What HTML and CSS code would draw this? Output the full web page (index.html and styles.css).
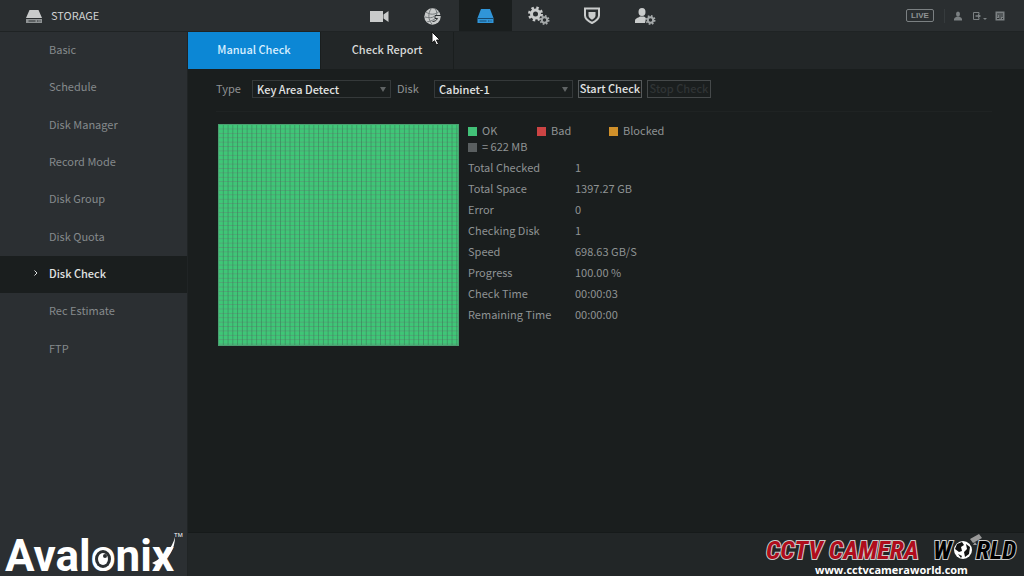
FILE: index.html
```html
<!DOCTYPE html>
<html lang="en">
<head>
<meta charset="utf-8">
<title>Storage - Disk Check</title>
<link rel="stylesheet" href="styles.css">
</head>
<body>
<div class="app">
  <header class="topbar">
    <h1 class="title">
      <svg class="title-icon" viewBox="0 0 18 16" width="18" height="16" aria-hidden="true">
        <path class="light" d="M4.500 2h9L17 10H1z"/>
        <path class="base" d="M1 10h16v5H1z"/>
        <path class="dark" d="M1 10.500h16M3.500 13h7M12 13h1.500M14.500 13h1"/>
      </svg>
      <span class="title-text">STORAGE</span>
    </h1>
    <nav class="modules" aria-label="Modules">
      <a class="module" href="#camera" aria-label="Camera"><svg viewBox="0 0 20 20" width="20" height="20"><path class="light" d="M0 5h13v11H0zM13.500 8.500L18.500 5v11l-5-3.500z"/></svg></a>
      <a class="module" href="#network" aria-label="Network"><svg viewBox="0 0 20 20" width="20" height="20"><circle class="light" cx="9.500" cy="10.500" r="8.200"/><path class="mesh" d="M3 6c4 3 9 3 13-.5M2 11c4 1 7 1 9-.5M4 16c4-1 7-2 9-4M8 3c-3 4-3 11 1 15M12 3c2 2 2 4 1.500 6"/><path class="dark" d="M18 9.500h-6v3h2.500c-1 2-3 3-5 3"/></svg></a>
      <a class="module is-active" href="#storage" aria-label="Storage"><svg viewBox="0 0 20 20" width="20" height="20"><path class="blue" d="M5 3h9l3.500 9h-16zM1.500 12h16v5h-16z"/><path class="blue-line" d="M1.500 12.500h16M3.500 15h7M12 15h1.500M14.500 15h1"/></svg></a>
      <a class="module" href="#system" aria-label="System"><svg viewBox="0 0 22 20" width="22" height="20"><circle class="gear" cx="7.500" cy="8" r="4"/><circle class="teeth" cx="7.500" cy="8" r="6"/><circle class="gear small" cx="16.500" cy="14" r="2.700"/><circle class="teeth small" cx="16.500" cy="14" r="4"/></svg></a>
      <a class="module" href="#security" aria-label="Security"><svg viewBox="0 0 20 20" width="20" height="20"><path class="shield" d="M3 2.500h14v7c0 4-4 6-7 7.500C7 15.500 3 13.500 3 9.500z"/><path class="light" d="M6.500 6h7v3.500c0 2-2 3.500-3.500 4.200C8.500 13 6.500 11.500 6.500 9.500z"/></svg></a>
      <a class="module" href="#account" aria-label="Account"><svg viewBox="0 0 22 20" width="22" height="20"><ellipse class="light" cx="8" cy="6" rx="3.500" ry="4"/><path class="light" d="M1 17v-2c0-3 3-3 5-4.500h4c1 1 2 1 2 2L11 17z"/><circle class="gear small" cx="16.500" cy="14" r="2.700"/><circle class="teeth small" cx="16.500" cy="14" r="4"/></svg></a>
    </nav>
    <div class="tools">
      <button class="live" type="button">LIVE</button>
      <span class="divider"></span>
      <button class="tool" type="button" aria-label="User"><svg viewBox="0 0 10 10" width="10" height="10"><ellipse cx="5" cy="3" rx="2" ry="2.500"/><path d="M1 9.500V8q0-1.500 3-2.500h2Q9 6.500 9 8v1.500z"/></svg></button>
      <button class="tool" type="button" aria-label="Log out"><svg viewBox="0 0 16 10" width="16" height="10"><path class="line" d="M8 3V1.500H2.500v7H8V7"/><path d="M4.500 4.200H7V2.500L10 5 7 7.500V5.800H4.500zM12 7h4l-2 2z"/></svg></button>
      <button class="tool" type="button" aria-label="QR code"><svg viewBox="0 0 10 10" width="10" height="10"><path d="M.5.500h9v9h-9z"/><path class="dark" d="M2 3h2M6 3h2M2 5h1M5 2v6M6 5h2M2 7.500h2M7 7.500h1"/></svg></button>
    </div>
  </header>

  <aside class="sidebar">
    <nav class="menu" aria-label="Storage">
      <a href="#basic">Basic</a>
      <a href="#schedule">Schedule</a>
      <a href="#manager">Disk Manager</a>
      <a href="#record">Record Mode</a>
      <a href="#group">Disk Group</a>
      <a href="#quota">Disk Quota</a>
      <a class="is-active" href="#check" aria-current="page"><svg class="chevron" viewBox="0 0 6 8" width="6" height="8" aria-hidden="true"><path d="M1.500 1.500L4 4 1.500 6.500"/></svg>Disk Check</a>
      <a href="#estimate">Rec Estimate</a>
      <a href="#ftp">FTP</a>
    </nav>
    <svg class="avalonix" viewBox="0 0 187 50" width="187" height="50" role="img" aria-label="Avalonix">
      <text class="avalonix-name" x="5" y="45">Avalonix</text>
      <ellipse class="eye-socket" cx="103" cy="33" rx="8" ry="9"/>
      <ellipse class="eye" cx="103" cy="33" rx="5" ry="6"/>
      <circle class="eye-socket" cx="105" cy="30" r="2"/>
      <path class="swoosh" d="M175 11c0 12-6 21-17 29l-6-3c12-6 20-14 23-26z"/>
      <text class="avalonix-tm" x="174" y="11">TM</text>
    </svg>
  </aside>

  <main class="main">
    <div class="tabs" role="tablist">
      <button class="tab is-active" type="button" role="tab" aria-selected="true">Manual Check</button>
      <button class="tab" type="button" role="tab" aria-selected="false">Check Report</button>
    </div>
    <section class="panel">
      <form class="filters">
        <label class="type-label" for="type">Type</label>
        <select id="type"><option>Key Area Detect</option></select>
        <label class="disk-label" for="disk">Disk</label>
        <select id="disk"><option>Cabinet-1</option></select>
        <button class="action" type="button">Start Check</button>
        <button class="action" type="button" disabled>Stop Check</button>
      </form>
      <div class="result">
        <div class="blocks" role="img" aria-label="Disk block map"></div>
        <div class="details">
          <ul class="legend">
            <li><i class="swatch ok"></i>OK</li>
            <li><i class="swatch bad"></i>Bad</li>
            <li><i class="swatch blocked"></i>Blocked</li>
            <li class="unit"><i class="swatch"></i>= 622 MB</li>
          </ul>
          <dl class="stats">
            <dt>Total Checked</dt><dd>1</dd>
            <dt>Total Space</dt><dd>1397.27 GB</dd>
            <dt>Error</dt><dd>0</dd>
            <dt>Checking Disk</dt><dd>1</dd>
            <dt>Speed</dt><dd>698.63 GB/S</dd>
            <dt>Progress</dt><dd>100.00 %</dd>
            <dt>Check Time</dt><dd>00:00:03</dd>
            <dt>Remaining Time</dt><dd>00:00:00</dd>
          </dl>
        </div>
      </div>
    </section>
    <footer class="footer">
      <svg class="ccw" viewBox="0 0 262 43" width="262" height="43" role="img" aria-label="CCTV Camera World">
        <text class="ccw-red" x="4" y="26">CCTV CAMERA</text>
        <text class="ccw-black" x="171" y="26">W</text>
        <text class="ccw-black" x="214" y="26">RLD</text>
        <circle class="globe" cx="201" cy="17" r="9"/>
        <path class="land" d="M195 11l5-2 2 3-3 2 1 4-3 1-4-3zM204 11l4 3-1 7-4 3-1-5 3-3zM196 21l4 2-1 2z"/>
        <path class="cam" d="M208 6l9-5 3 4-9 5zM213 9l2 3h-4z"/>
        <text class="ccw-url" x="53" y="41">www.cctvcameraworld.com</text>
      </svg>
    </footer>
  </main>
</div>
<svg class="cursor" viewBox="0 0 10 16" width="10" height="16" aria-hidden="true"><path d="M1 1v11l2.500-2.300L5.500 14l2-1-2-4H9z"/></svg>
</body>
</html>
```
FILE: styles.css
```css
* { box-sizing: border-box; }
body { margin: 0; background: #1a1e1e; color: #8f9394; font: 11px/16px "Noto Sans CJK SC", "Noto Sans", sans-serif; }
a { color: inherit; text-decoration: none; }
button, select { font: inherit; color: inherit; }
svg { display: block; flex: none; }
.light { fill: #c9cbcb; }
.base { fill: #8f9394; }
.blue { fill: #3095d8; }
.blue-line { fill: none; stroke: #164a70; }
.dark { fill: none; stroke: #2a2e30; }
.mesh { fill: none; stroke: #74797b; }
.app { display: grid; grid-template: 32px 1fr / 188px 1fr; min-height: 100vh; }
.topbar { grid-column: 1 / 3; display: flex; background: #2a2e30; border-bottom: 1px solid #1f2324; }
.title { display: flex; align-items: center; gap: 8px; width: 353px; margin: 0; padding-left: 25px; font-size: 11px; font-weight: 400; color: #d0d2d2; }
.title-text { padding-bottom: 2px; }
.modules { display: flex; }
.module { display: grid; place-items: center; width: 53px; }
.module.is-active { background: #1a1e1e; }
.gear { fill: none; stroke: #c9cbcb; stroke-width: 3; }
.teeth { fill: none; stroke: #c9cbcb; stroke-width: 3; stroke-dasharray: 2.360; }
.gear.small { stroke: #a4a8a9; stroke-width: 2; }
.teeth.small { stroke: #a4a8a9; stroke-width: 2; stroke-dasharray: 1.570; }
.shield { fill: none; stroke: #c9cbcb; stroke-width: 2; }
.tools { display: flex; align-items: center; gap: 8px; margin-left: auto; padding-right: 19px; }
.live { width: 28px; height: 13px; padding: 0; border: 1px solid #7b8082; border-radius: 2px; background: none; color: #8f9394; font: 700 8px/11px "Liberation Sans", sans-serif; margin-right: 2px; }
.divider { width: 1px; height: 14px; background: #363b3d; }
.tool { padding: 0; border: 0; background: none; fill: #7b8082; }
.line { fill: none; stroke: #7b8082; }
.sidebar { display: flex; flex-direction: column; justify-content: space-between; background: #2b2f32; border-right: 1px solid #202425; }
.menu { display: flex; flex-direction: column; height: 336px; }
.menu a { position: relative; flex: 1; display: flex; align-items: center; padding: 0 0 3px 49px; color: #858a8c; }
.menu a.is-active { background: #1a1e1e; color: #e2e4e4; font-weight: 500; }
.chevron { position: absolute; left: 33px; fill: none; stroke: #e2e4e4; }
.avalonix-name { font: 700 44px "Roboto", sans-serif; fill: #fff; }
.avalonix-tm { font: 6px "Liberation Sans", sans-serif; fill: #fff; }
.eye, .swoosh { fill: #fff; }
.eye-socket { fill: #2b2f32; }
.main { display: flex; flex-direction: column; }
.tabs { display: flex; height: 37px; background: #222627; }
.tab { width: 133px; padding: 0 0 3px; border: 0; border-right: 1px solid #1a1e1e; background: none; color: #d8dada; font-weight: 500; }
.tab.is-active { background: #0c87d5; color: #d9efff; }
.panel { flex: 1; padding: 11px 32px 0 28px; }
.filters { display: flex; align-items: flex-start; height: 32px; margin-bottom: 12px; border-bottom: 1px solid #1f2323; }
.type-label { width: 36px; }
.disk-label { width: 37px; margin-left: 6px; }
select { appearance: none; width: 139px; height: 18px; padding: 0 4px; border: 1px solid #35393a; border-radius: 0; background: #1a1e1e url("data:image/svg+xml,%3Csvg xmlns='http://www.w3.org/2000/svg' width='6' height='5'%3E%3Cpath d='M0 0h6L3 5z' fill='%23606465'/%3E%3C/svg%3E") no-repeat right 4px center; color: #e2e4e4; font-weight: 500; }
.action { width: 64px; height: 18px; margin-left: 5px; padding: 0 0 2px; border: 1px solid #565a5b; background: none; color: #e2e4e4; font-weight: 500; line-height: 14px; white-space: nowrap; }
.action:disabled { color: #303435; border-color: #45494a; }
.result { display: flex; gap: 9px; padding-left: 2px; }
.blocks { width: 241px; height: 222px; border: 1px solid #4a9f70; background: linear-gradient(to right, transparent 75%, #3a7f5999 75%) 0 0 / 2% 100%, linear-gradient(transparent 75%, #5f8a7399 75%) 0 0 / 100% 2%, #3fc677; }
.details { margin-top: -2px; }
.legend { list-style: none; display: grid; grid-template-columns: 69px 72px 80px; margin: 0; padding: 0; }
.legend li { display: flex; align-items: center; gap: 5px; }
.swatch { width: 9px; height: 9px; margin-top: 2px; background: #5a5f60; }
.ok { background: #42c178; }
.bad { background: #cc4444; }
.blocked { background: #d0902a; }
.stats { display: grid; grid-template-columns: 107px auto; margin: 3px 0 0; line-height: 21px; }
.stats dd { margin: 0; }
.footer { display: flex; justify-content: flex-end; height: 44px; background: #222627; border-top: 1px solid #161a1a; }
.ccw-red, .ccw-black { font: italic 700 26px "Liberation Sans Narrow", "Roboto Condensed", sans-serif; paint-order: stroke; stroke: #ccc; stroke-width: 2; fill: #b00d1c; }
.ccw-black { fill: #000; }
.globe { fill: #fff; }
.land { fill: #111; }
.cam { fill: #999; }
.ccw-url { font: 700 11px "Open Sans", sans-serif; fill: #fff; }
.cursor { position: absolute; left: 431px; top: 31px; fill: #fff; stroke: #111; }
```
